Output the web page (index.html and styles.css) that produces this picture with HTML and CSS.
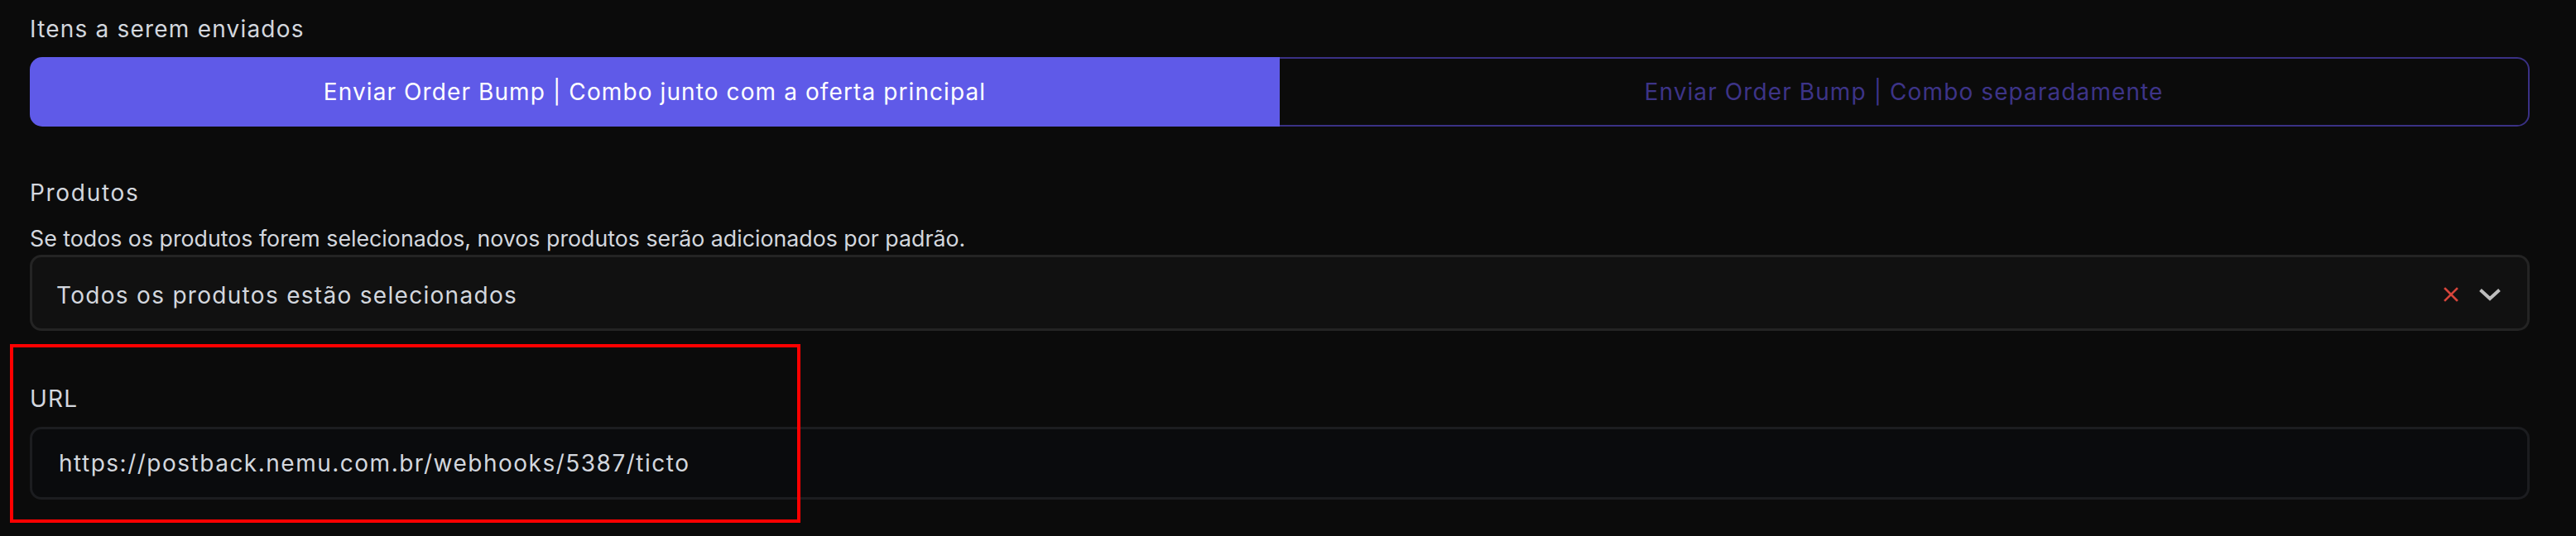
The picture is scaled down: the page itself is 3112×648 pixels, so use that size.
FILE: index.html
```html
<!DOCTYPE html>
<html lang="pt-BR">
<head>
<meta charset="utf-8">
<title>Postback</title>
<link rel="stylesheet" href="styles.css">
</head>
<body>
<main class="form">
  <section class="field">
    <div class="label">Itens a serem enviados</div>
    <div class="toggle">
      <button class="seg seg-active">Enviar Order Bump | Combo junto com a oferta principal</button>
      <button class="seg seg-idle">Enviar Order Bump | Combo separadamente</button>
    </div>
  </section>

  <section class="field field-products">
    <div class="label label-wide">Produtos</div>
    <div class="helper">Se todos os produtos forem selecionados, novos produtos serão adicionados por padrão.</div>
    <div class="select">
      <span class="select-value">Todos os produtos estão selecionados</span>
      <span class="select-icons">
        <svg class="icon-x" width="18" height="18" viewBox="0 0 18 18"><path d="M2 2 L16 16 M16 2 L2 16" stroke="#d6453b" stroke-width="2.6" stroke-linecap="square" fill="none"/></svg>
        <svg class="icon-chev" width="28" height="16" viewBox="0 0 28 16"><path d="M2.5 2.5 L14 13 L25.5 2.5" stroke="#bdbdbd" stroke-width="4" fill="none"/></svg>
      </span>
    </div>
  </section>

  <section class="field field-url">
    <div class="label">URL</div>
    <div class="input">https://postback.nemu.com.br/webhooks/5387/ticto</div>
    <div class="highlight"></div>
  </section>
</main>
</body>
</html>
```

FILE: styles.css
```css
html, body {
  margin: 0;
  padding: 0;
  background: #0b0b0b;
}
body {
  width: 3112px;
  height: 648px;
  overflow: hidden;
  font-family: Inter, "Liberation Sans", sans-serif;
  color: #d3d7de;
  letter-spacing: 1.2px;
}
.form {
  padding: 15px 56px 0 36px;
  display: flex;
  flex-direction: column;
  gap: 60px;
}
.field {
  display: flex;
  flex-direction: column;
  gap: 14px;
}
.field-products { gap: 0; }
.field-url { position: relative; margin-top: 2px; }
.label {
  font-size: 28px;
  line-height: 40px;
}
.label-wide { letter-spacing: 1.7px; }
.field-products .label { margin-bottom: 15px; }
.helper {
  font-size: 26.75px;
  line-height: 40px;
  letter-spacing: 0;
}
.toggle {
  display: grid;
  grid-template-columns: 1510px 1fr;
  height: 84px;
}
.seg {
  font-family: inherit;
  font-size: 28px;
  letter-spacing: 1.1px;
  margin: 0;
  padding: 0;
  cursor: pointer;
}
.seg-active {
  background: #5f5ae8;
  color: #ffffff;
  border: none;
  border-radius: 15px 0 0 15px;
}
.seg-idle {
  background: transparent;
  color: #3d3488;
  border: 2px solid #3a3185;
  border-left: none;
  border-radius: 0 15px 15px 0;
}
.select {
  height: 92px;
  box-sizing: border-box;
  background: #111111;
  border: 3px solid #242424;
  border-radius: 14px;
  display: flex;
  align-items: center;
  padding: 0 31px 0 29px;
  font-size: 28px;
  letter-spacing: 1.3px;
}
.select-value { flex: 1; padding-top: 6px; }
.select-icons {
  display: flex;
  align-items: center;
  gap: 24px;
  padding-top: 4px;
}
.input {
  height: 88px;
  box-sizing: border-box;
  background: #0a0b0d;
  border: 3px solid #1c1d20;
  border-radius: 14px;
  display: flex;
  align-items: center;
  padding: 0 32px;
  font-size: 28px;
  letter-spacing: 1.5px;
}
.highlight {
  position: absolute;
  left: -24px;
  top: -46px;
  width: 955px;
  height: 216px;
  box-sizing: border-box;
  border: 4px solid #ff0000;
  pointer-events: none;
}
```
